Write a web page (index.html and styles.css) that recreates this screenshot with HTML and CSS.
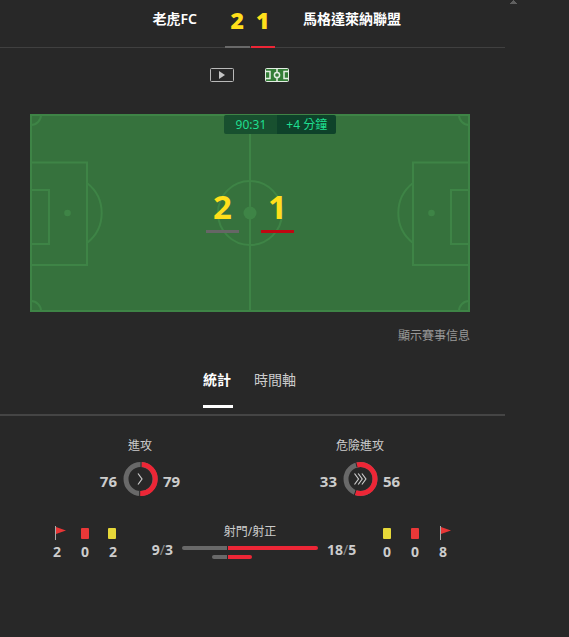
FILE: index.html
```html
<!DOCTYPE html>
<html lang="zh-Hant">
<head>
<meta charset="utf-8">
<meta name="viewport" content="width=device-width, initial-scale=1">
<title>老虎FC 2 - 1 馬格達萊納聯盟</title>
<link rel="stylesheet" href="styles.css">
</head>
<body>
<svg class="scroll-hint" viewBox="0 0 7 4" aria-hidden="true"><path d="M3 0h1v1h1v1h1v1h1v1H0V3h1V2h1V1h1z"/></svg>
<main class="match">
  <header class="scoreboard">
    <h2 class="team team-home">老虎FC</h2>
    <div class="score">
      <span class="score-home">2</span>
      <span class="score-away">1</span>
    </div>
    <h2 class="team">馬格達萊納聯盟</h2>
  </header>

  <nav class="views">
    <button class="view" type="button" aria-label="影片">
      <svg viewBox="0 0 24 14"><rect x=".5" y=".5" width="23" height="13" rx="1" fill="none" stroke="#b9b9b9"/><path d="M9 3v8l6-4z" fill="#c4c4c4"/></svg>
    </button>
    <button class="view" type="button" aria-label="球場">
      <svg viewBox="0 0 24 14"><rect x=".5" y=".5" width="23" height="13" rx="1" fill="#347d37" stroke="#e3ede3"/><g fill="none" stroke="#e3ede3" stroke-width="1.5"><path d="M12 0v4M12 10v4M1 3.500h4v7H1M23 3.500h-4v7h4"/><circle cx="12" cy="7" r="2.600"/></g></svg>
    </button>
  </nav>

  <section class="pitch">
    <svg class="field" viewBox="0 0 440 198" aria-hidden="true">
      <rect width="440" height="198" fill="#36723d"/>
      <g fill="none" stroke="#3e8446" stroke-width="2">
        <rect x="1" y="1" width="438" height="196"/>
        <path d="M220 1v196M1 48.500h56v102.500H1M1 76h18v54H1M439 48.500h-56v102.500H439M439 76h-18v54h18"/>
        <circle cx="220" cy="99" r="32"/>
        <path d="M57 69a38 38 0 0 1 0 60M383 69a38 38 0 0 0 0 60"/>
        <path d="M11 1A10 10 0 0 1 1 11M429 1a10 10 0 0 0 10 10M1 187a10 10 0 0 1 10 10M439 187a10 10 0 0 0-10 10"/>
      </g>
      <g fill="#3e8446"><circle cx="220" cy="99" r="6.500"/><circle cx="37.500" cy="99" r="3.300"/><circle cx="401.500" cy="99" r="3.300"/></g>
    </svg>
    <div class="clock"><span class="clock-time">90:31</span><span class="clock-extra">+4 分鐘</span></div>
    <div class="pitch-score"><span class="goals goals-home">2</span><span class="goals goals-away">1</span></div>
  </section>
  <a class="info-link" href="#info">顯示賽事信息</a>

  <nav class="tabs">
    <button class="tab tab-active" type="button">統計</button>
    <button class="tab" type="button">時間軸</button>
  </nav>

  <section class="attacks">
    <div class="attack">
      <h3 class="label">進攻</h3>
      <div class="versus">
        <span class="value value-home">76</span>
        <svg class="ring" viewBox="0 0 36 36" aria-hidden="true">
          <circle class="arc arc-home" cx="18.500" cy="18" r="14.500"/>
          <path class="arc arc-away" d="M19.500 3.500A14.500 14.500 0 1 1 18 32.500"/>
          <path class="gap" d="M19 0v6M17.700 30v6"/>
          <path class="chevron" d="M16 12.500l4 5.500-4 5.500"/>
        </svg>
        <span class="value">79</span>
      </div>
    </div>
    <div class="attack">
      <h3 class="label">危險進攻</h3>
      <div class="versus">
        <span class="value value-home">33</span>
        <svg class="ring" viewBox="0 0 36 36" aria-hidden="true">
          <circle class="arc arc-home" cx="18.500" cy="18" r="14.500"/>
          <path class="arc arc-away" d="M14.700 4A14.500 14.500 0 1 1 13.500 31.600"/>
          <path class="gap" d="M13.500 0l1.500 6M14 29l-2 6"/>
          <path class="chevron" d="M12.500 12.500l4 5.500-4 5.500M16.200 12.500l4 5.500-4 5.500M19.900 12.500l4 5.500-4 5.500"/>
        </svg>
        <span class="value">56</span>
      </div>
    </div>
  </section>

  <section class="totals">
    <div class="counts">
      <div class="count"><svg class="mark" viewBox="0 0 14 14"><path d="M5.500 0v14" stroke="#aaa"/><path d="M6 1l10 3.500L6 8z" fill="#e93636"/></svg>2</div>
      <div class="count"><svg class="mark" viewBox="0 0 14 14"><rect x="3" y="2" width="8" height="11" rx="1" fill="#ea3838"/></svg>0</div>
      <div class="count"><svg class="mark" viewBox="0 0 14 14"><rect x="2" y="2" width="8" height="11" rx="1" fill="#e6d839"/></svg>2</div>
    </div>
    <div class="shots">
      <h3 class="label">射門/射正</h3>
      <div class="shots-row">
        <span class="value value-home">9<i>/</i>3</span>
        <div class="bars">
          <div class="bar"><span class="bar-home"></span><span class="bar-away"></span></div>
          <div class="bar bar-target"><span class="bar-home"></span><span class="bar-away"></span></div>
        </div>
        <span class="value">18<i>/</i>5</span>
      </div>
    </div>
    <div class="counts">
      <div class="count"><svg class="mark" viewBox="0 0 14 14"><rect x="3" y="2" width="8" height="11" rx="1" fill="#e6d839"/></svg>0</div>
      <div class="count"><svg class="mark" viewBox="0 0 14 14"><rect x="3" y="2" width="8" height="11" rx="1" fill="#ea3838"/></svg>0</div>
      <div class="count"><svg class="mark" viewBox="0 0 14 14"><path d="M4.500 0v14" stroke="#aaa"/><path d="M5 1l10 3.500L5 8z" fill="#e93636"/></svg>8</div>
    </div>
  </section>
</main>
</body>
</html>
```
FILE: styles.css
```css
* { box-sizing: border-box; }

body {
  margin: 0;
  background: #282828;
  color: #ccc;
  font-family: "Noto Sans", "Noto Sans CJK TC", sans-serif;
  font-size: 12px;
  line-height: 16px;
}

button {
  padding: 0;
  border: 0;
  background: none;
  color: inherit;
  font: inherit;
  cursor: pointer;
}

h2, h3 { margin: 0; font: inherit; }
svg { display: block; }

.scroll-hint {
  position: absolute;
  top: 0;
  right: 52px;
  width: 7px;
  height: 4px;
  fill: #606060;
}

.match { margin-right: 64px; }

.scoreboard {
  display: grid;
  grid-template-columns: 1fr 50px 1fr;
  column-gap: 28px;
  height: 48px;
  padding-right: 5px;
  border-bottom: 1px solid #404040;
}

.team {
  padding-top: 8px;
  color: #fff;
  font-size: 14px;
  font-weight: 600;
  line-height: 22px;
}

.team-home { text-align: right; }

.score {
  display: grid;
  grid-template-columns: 1fr 1fr;
  column-gap: 1px;
  height: 48px;
  color: #ffdf1b;
  font-size: 23px;
  font-weight: 900;
  line-height: 41px;
  text-align: center;
}

.score-home { border-bottom: 2px solid #696969; }
.score-away { border-bottom: 2px solid #ed2636; }

.views {
  display: flex;
  justify-content: center;
  gap: 31px;
  padding: 20px 6px 32px 0;
}

.view svg { width: 24px; height: 14px; }

.pitch {
  position: relative;
  margin: 0 35px 0 30px;
}

.field { width: 100%; height: auto; }

.clock {
  position: absolute;
  top: 1px;
  left: 44%;
  display: flex;
  color: #1fdf91;
  line-height: 19px;
}

.clock-time { padding: 0 11px 0 12px; background: #18502f; border-radius: 2px 0 0 2px; }
.clock-extra { padding: 0 9px; background: #0e422a; border-radius: 0 2px 2px 0; }

.pitch-score {
  position: absolute;
  inset: 0;
  display: flex;
  justify-content: center;
  align-items: flex-start;
  gap: 22px;
  padding-top: 73px;
}

.goals {
  width: 33px;
  padding-bottom: 3px;
  border-bottom: 3px solid #666;
  color: #ffdf1b;
  font-size: 33px;
  font-weight: 700;
  line-height: 40px;
  text-align: center;
}

.goals-away { border-color: #bf0712; }

.info-link {
  display: block;
  width: fit-content;
  margin: 16px 35px 0 auto;
  color: #999;
  text-decoration: none;
}

.tabs {
  display: flex;
  justify-content: center;
  gap: 21px;
  margin-top: 24px;
  padding: 0 6px 6px 0;
  border-bottom: 2px solid #454545;
}

.tab {
  height: 40px;
  padding-bottom: 14px;
  border-bottom: 3px solid transparent;
  font-size: 14px;
  line-height: 20px;
  text-align: left;
}

.tab-active {
  min-width: 30px;
  border-color: #fff;
  color: #fff;
  font-weight: 700;
}

.attacks {
  display: grid;
  grid-template-columns: 1fr 1fr;
  margin: 22px 35px 0 30px;
}

.label { text-align: center; }

.versus {
  display: grid;
  grid-template-columns: 1fr 36px 1fr;
  column-gap: 5px;
  align-items: center;
  margin-top: 7px;
}

.ring { width: 36px; height: 36px; }
.arc { fill: none; stroke-width: 5; }
.arc-home { stroke: #696969; }
.arc-away { stroke: #ed2636; }
.gap { stroke: #282828; }
.chevron { fill: none; stroke: #ccc; stroke-width: 1.2; }

.value {
  padding-top: 4px;
  font-size: 15px;
  font-weight: 700;
  line-height: 20px;
}

.value-home { text-align: right; }
.value i { color: #888; font-weight: 400; font-style: normal; }

.totals {
  display: flex;
  justify-content: space-between;
  margin: 27px 48px 0 43px;
}

.counts { display: flex; }

.count {
  display: grid;
  grid-template-rows: 14px 20px;
  row-gap: 2px;
  justify-items: center;
  width: 28px;
  padding-top: 2px;
  font-size: 14px;
  font-weight: 700;
  line-height: 20px;
}

.mark { width: 14px; height: 14px; overflow: visible; }

.shots { flex: 1; }

.shots-row {
  display: grid;
  grid-template-columns: 1fr 136px 1fr;
  column-gap: 9px;
}

.shots-row .value { padding-top: 0; font-size: 14px; }

.bars { padding-top: 6px; }

.bar {
  display: grid;
  grid-template-columns: 1fr 2fr;
  column-gap: 1px;
  height: 4px;
}

.bar-target {
  grid-template-columns: 3fr 5fr;
  width: 40px;
  margin: 5px 0 0 30px;
}

.bar-home { background: #696969; border-radius: 2px 0 0 2px; }
.bar-away { background: #ed2636; border-radius: 0 2px 2px 0; }
```
